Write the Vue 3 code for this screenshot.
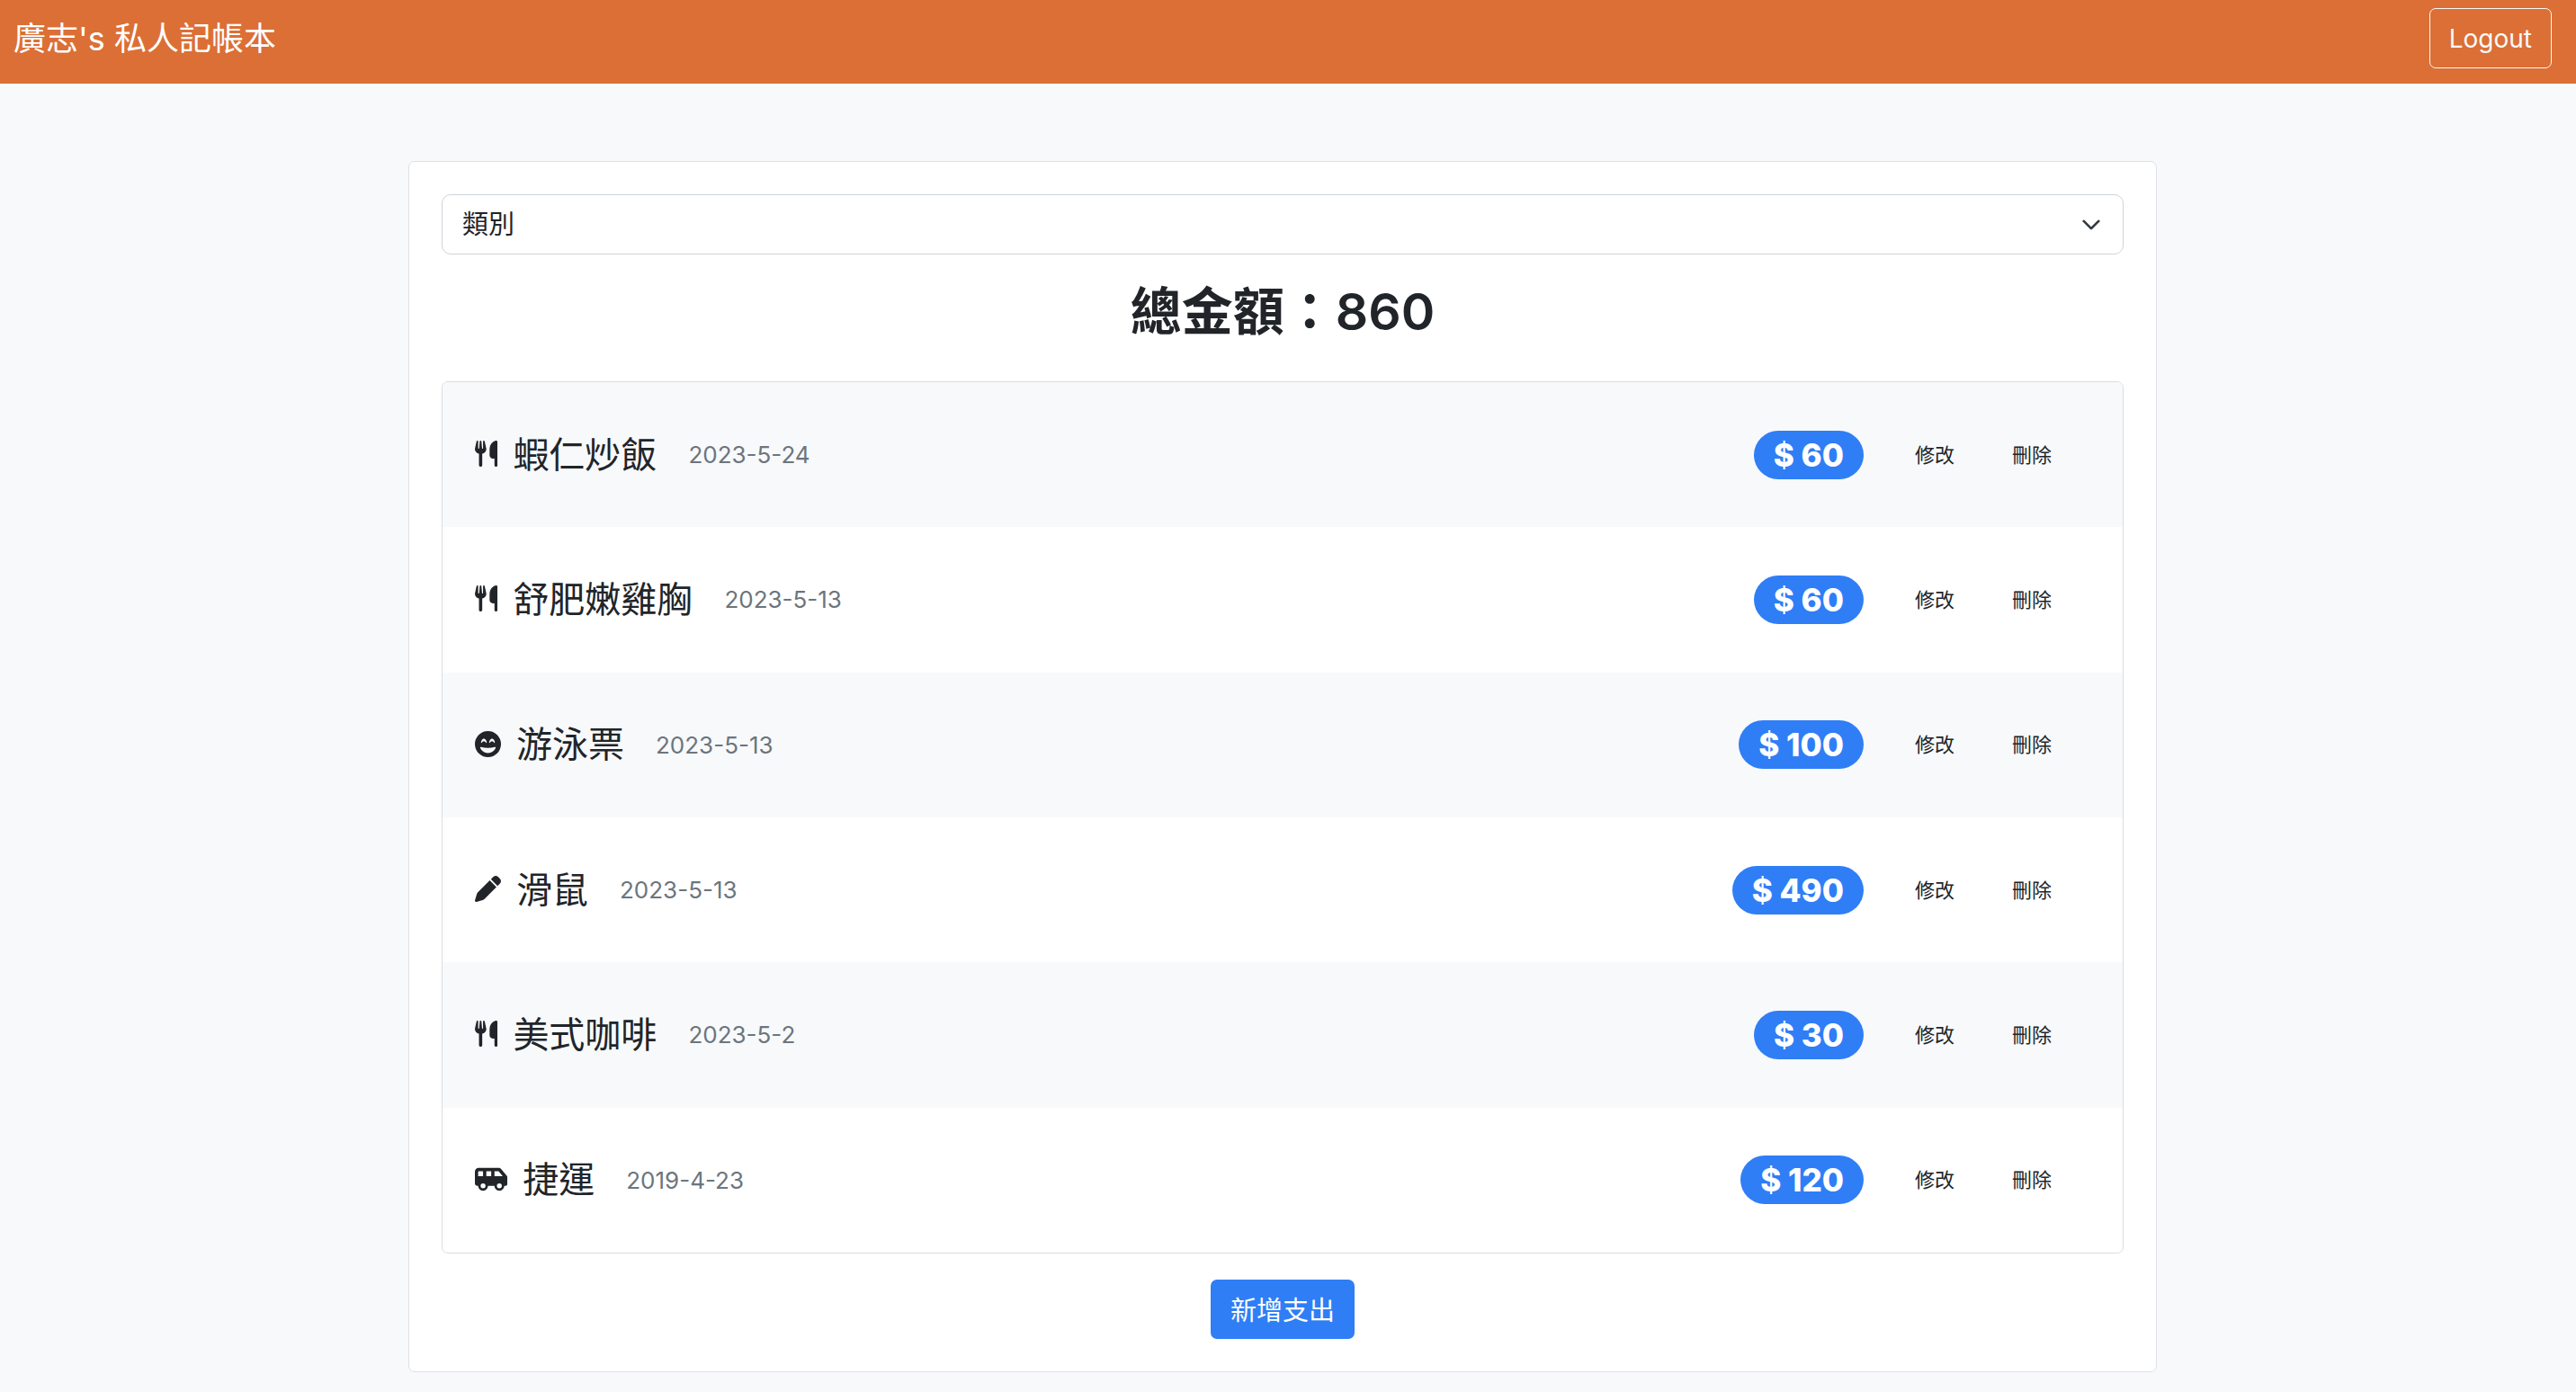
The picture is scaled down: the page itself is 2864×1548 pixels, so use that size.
<script setup>
import { ref } from 'vue'

const category = ref('')
const categories = ['餐飲食品', '休閒娛樂', '交通出行', '其他']

const icons = {
  food: {
    width: 448,
    path: 'M416 0C400 0 288 32 288 176V288c0 35.3 28.7 64 64 64h32V480c0 17.7 14.3 32 32 32s32-14.3 32-32V352 240 32c0-17.7-14.3-32-32-32zM64 16C64 7.8 57.9 1 49.7 .1S34.2 4.6 32.4 12.5L2.1 148.8C.7 155.1 0 161.5 0 167.9c0 45.9 35.1 83.6 80 87.7V480c0 17.7 14.3 32 32 32s32-14.3 32-32V255.6c44.9-4.1 80-41.8 80-87.7c0-6.4-.7-12.8-2.1-19.1L191.6 12.5c-1.8-8-9.3-13.3-17.4-12.4S160 7.8 160 16V150.2c0 5.4-4.4 9.8-9.8 9.8c-5.1 0-9.3-3.9-9.8-9L127.9 14.6C127.2 6.3 120.3 0 112 0s-15.2 6.3-15.9 14.6L83.7 151c-.5 5.1-4.7 9-9.8 9c-5.4 0-9.8-4.4-9.8-9.8V16z',
  },
  fun: {
    width: 512,
    path: 'M256 512A256 256 0 1 0 256 0a256 256 0 1 0 0 512zM388.1 312.8c12.3-3.8 24.3 6.9 19.3 18.7C382.4 390.6 324.2 432 256.3 432s-126.2-41.4-151.1-100.5c-5-11.8 7-22.5 19.3-18.7c39.7 12.2 84.5 19 131.8 19s92.1-6.8 131.8-19zM217.6 228.8l-.2-.2c-.2-.2-.4-.5-.7-.9c-.6-.8-1.6-2-2.8-3.4c-2.5-2.8-6-6.6-10.2-10.3c-8.8-7.8-18.8-14-27.7-14s-18.9 6.2-27.7 14c-4.2 3.7-7.7 7.5-10.2 10.3c-1.2 1.4-2.2 2.6-2.8 3.4c-.3 .4-.6 .7-.7 .9l-.2 .2c-2.1 2.8-5.7 3.9-8.9 2.8s-5.5-4.1-5.5-7.6c0-17.9 6.7-35.6 16.6-48.8c9.8-13 23.9-23.2 39.4-23.2s29.6 10.2 39.4 23.2c9.9 13.2 16.6 30.9 16.6 48.8c0 3.4-2.2 6.5-5.5 7.6s-6.9 0-8.9-2.8zM377.6 228.8l-.2-.2c-.2-.2-.4-.5-.7-.9c-.6-.8-1.6-2-2.8-3.4c-2.5-2.8-6-6.6-10.2-10.3c-8.8-7.8-18.8-14-27.7-14s-18.9 6.2-27.7 14c-4.2 3.7-7.7 7.5-10.2 10.3c-1.2 1.4-2.2 2.6-2.8 3.4c-.3 .4-.6 .7-.7 .9l-.2 .2c-2.1 2.8-5.7 3.9-8.9 2.8s-5.5-4.1-5.5-7.6c0-17.9 6.7-35.6 16.6-48.8c9.8-13 23.9-23.2 39.4-23.2s29.6 10.2 39.4 23.2c9.9 13.2 16.6 30.9 16.6 48.8c0 3.4-2.2 6.5-5.5 7.6s-6.9 0-8.9-2.8z',
  },
  other: {
    width: 512,
    path: 'M362.7 19.3L314.3 67.7 444.3 197.7l48.4-48.4c25-25 25-65.5 0-90.5L453.3 19.3c-25-25-65.5-25-90.5 0zm-71 71L58.6 323.5c-10.4 10.4-18 23.3-22.2 37.4L1 481.2C-1.5 489.7 .8 498.8 7 505s15.3 8.5 23.7 6.1l120.3-35.4c14.1-4.2 27-11.8 37.4-22.2L421.7 220.3 291.7 90.3z',
  },
  transit: {
    width: 640,
    path: 'M64 104v88h96V96H72c-4.4 0-8 3.6-8 8zm482 88L465.1 96H384v96H546zm-226 0V96H224v96h96zM592 384H576c0 53-43 96-96 96s-96-43-96-96H256c0 53-43 96-96 96s-96-43-96-96H48c-26.5 0-48-21.5-48-48V104C0 64.2 32.2 32 72 32H192 352 465.1c18.9 0 36.8 8.3 49 22.8L625 186.5c9.7 11.5 15 26.1 15 41.2V336c0 26.5-21.5 48-48 48zm-64 0a48 48 0 1 0 -96 0 48 48 0 1 0 96 0zM160 432a48 48 0 1 0 0-96 48 48 0 1 0 0 96z',
  },
}

const records = [
  { id: 1, icon: 'food', name: '蝦仁炒飯', date: '2023-5-24', amount: 60 },
  { id: 2, icon: 'food', name: '舒肥嫩雞胸', date: '2023-5-13', amount: 60 },
  { id: 3, icon: 'fun', name: '游泳票', date: '2023-5-13', amount: 100 },
  { id: 4, icon: 'other', name: '滑鼠', date: '2023-5-13', amount: 490 },
  { id: 5, icon: 'food', name: '美式咖啡', date: '2023-5-2', amount: 30 },
  { id: 6, icon: 'transit', name: '捷運', date: '2019-4-23', amount: 120 },
]

const total = records.reduce((sum, record) => sum + record.amount, 0)
</script>

<template>
  <div class="page">
    <header class="navbar">
      <a class="brand" href="#">廣志's 私人記帳本</a>
      <button class="logout" type="button">Logout</button>
    </header>

    <main class="main">
      <section class="card">
        <div class="select-wrap">
          <select v-model="category" class="select" aria-label="類別">
            <option value="">類別</option>
            <option v-for="item in categories" :key="item" :value="item">{{ item }}</option>
          </select>
          <svg class="chevron" viewBox="0 0 16 16" aria-hidden="true">
            <path d="m2 5 6 6 6-6" />
          </svg>
        </div>

        <h1 class="total">總金額：{{ total }}</h1>

        <ul class="list">
          <li v-for="record in records" :key="record.id" class="row">
            <svg class="icon" :viewBox="`0 0 ${icons[record.icon].width} 512`" aria-hidden="true">
              <path :d="icons[record.icon].path" />
            </svg>
            <span class="name">{{ record.name }}</span>
            <time class="date">{{ record.date }}</time>
            <span class="badge">$ {{ record.amount }}</span>
            <div class="actions">
              <button class="action" type="button">修改</button>
              <button class="action" type="button">刪除</button>
            </div>
          </li>
        </ul>

        <button class="add" type="button">新增支出</button>
      </section>
    </main>
  </div>
</template>

<style>
body {
  margin: 0;
  background: #f8f9fb;
}
</style>

<style scoped>
.page {
  min-height: 100vh;
  box-sizing: border-box;
  padding-bottom: 22px;
  background: #f8f9fb;
  color: #212529;
  font-family: Inter, "Noto Sans CJK TC", sans-serif;
  font-size: 29px;
}

button,
select {
  font-family: inherit;
  color: inherit;
  cursor: pointer;
}

.navbar {
  display: flex;
  align-items: center;
  justify-content: space-between;
  padding: 9px 27px 17px 15px;
  background: #db6f36;
}

.brand {
  color: #fff;
  font-size: 36px;
  line-height: 54px;
  text-decoration: none;
}

.logout {
  box-sizing: border-box;
  height: 67px;
  padding: 0 21px;
  border: 1px solid #f8f9fa;
  border-radius: 7px;
  background: transparent;
  color: #f8f9fa;
  font-size: 28px;
}

.main {
  padding: 86px 12px 0 0;
}

.card {
  box-sizing: border-box;
  display: flex;
  flex-direction: column;
  max-width: 1944px;
  margin: 0 auto;
  padding: 36px;
  border: 1px solid #dee0e3;
  border-radius: 7px;
  background: #fff;
}

.select-wrap {
  display: grid;
  align-items: center;
}

.select,
.chevron {
  grid-area: 1 / 1;
}

.select {
  box-sizing: border-box;
  width: 100%;
  height: 67px;
  padding: 0 22px;
  appearance: none;
  border: 1px solid #ced4da;
  border-radius: 10px;
  background: #fff;
  font-size: 29px;
}

.chevron {
  justify-self: end;
  width: 22px;
  height: 22px;
  margin-right: 25px;
  fill: none;
  stroke: #343a40;
  stroke-width: 2;
  stroke-linecap: round;
  stroke-linejoin: round;
  pointer-events: none;
}

.total {
  margin: 29px 0 42px;
  font-size: 57px;
  font-weight: 600;
  line-height: 70px;
  text-align: center;
}

.list {
  display: grid;
  grid-auto-rows: 1fr;
  box-sizing: border-box;
  min-height: 970px;
  margin: 0 0 29px;
  padding: 0;
  overflow: hidden;
  border: 1px solid #dcdddf;
  border-radius: 7px;
  list-style: none;
}

.row {
  display: flex;
  align-items: center;
  padding: 0 36px;
}

.row:nth-child(odd) {
  background: #f8f9fb;
}

.icon {
  height: 29px;
  margin-bottom: 2px;
  fill: currentColor;
}

.name {
  margin-left: 17px;
  font-size: 40px;
  line-height: 58px;
}

.date {
  margin-left: 35px;
  color: #6c757d;
  font-size: 26px;
}

.badge {
  margin-left: auto;
  padding: 0 22px;
  border-radius: 27px;
  background: #2f7ef6;
  color: #fff;
  font-size: 35px;
  font-weight: 800;
  line-height: 54px;
}

.actions {
  display: flex;
  gap: 36px;
  margin: 0 29px 0 43px;
}

.action {
  padding: 7px 14px;
  border: 0;
  background: transparent;
  font-size: 22px;
  line-height: 32px;
}

.add {
  align-self: center;
  height: 66px;
  padding: 0 22px 2px;
  border: 0;
  border-radius: 7px;
  background: #2f7ef6;
  color: #fff;
  font-size: 29px;
}
</style>
